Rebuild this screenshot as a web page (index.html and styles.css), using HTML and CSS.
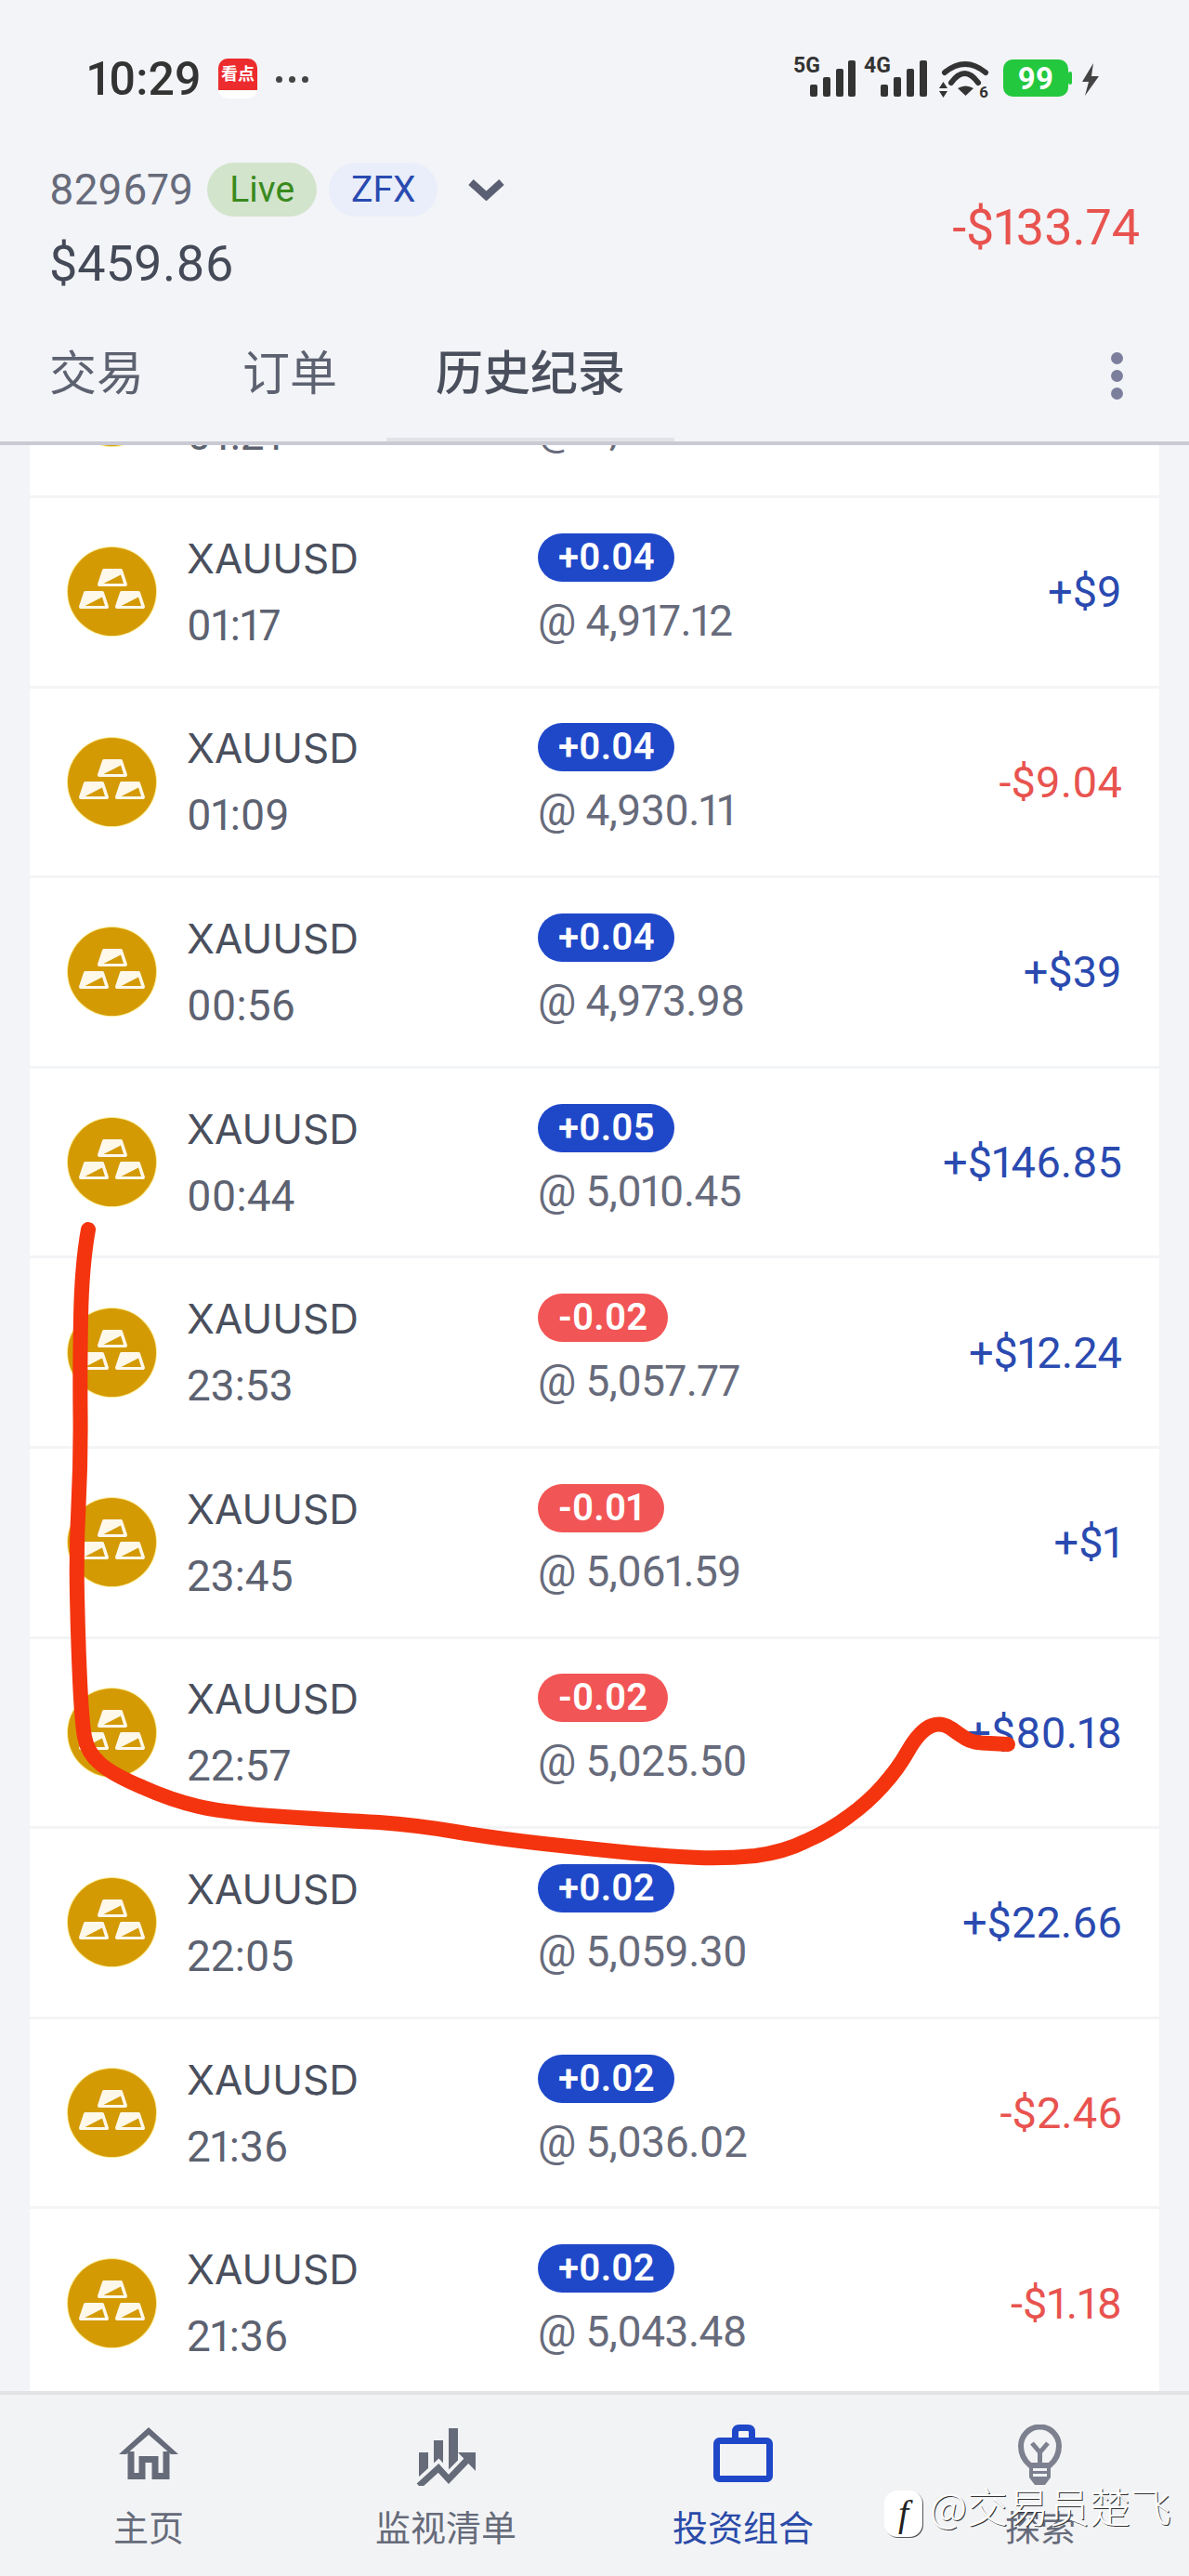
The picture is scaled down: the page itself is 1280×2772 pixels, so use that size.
FILE: index.html
```html
<!DOCTYPE html>
<html lang="zh-CN">
<head>
  <meta charset="UTF-8">
  <meta name="viewport" content="width=device-width, initial-scale=1.0">
  <title>历史纪录</title>
  <link rel="stylesheet" href="styles.css">
</head>
<body>

  <svg class="defs" width="0" height="0">
    <symbol id="gold" viewBox="0 0 97 97">
      <circle cx="48.5" cy="48.5" r="48.5" fill="#fbe98f"/>
      <circle cx="48.5" cy="48.5" r="47.5" fill="#d49a04"/>
      <path d="M40 26 H58 L63 41 H35 Z" fill="#fdf8ea" stroke="#fdf8ea" stroke-width="4" stroke-linejoin="round"/>
      <path d="M39.5 40 L58 30.500 L61 40 Z" fill="#d49a04"/>
      <path d="M20 50 H38 L43 65 H15 Z" fill="#fdf8ea" stroke="#fdf8ea" stroke-width="4" stroke-linejoin="round"/>
      <path d="M19.5 64 L38 54.500 L41 64 Z" fill="#d49a04"/>
      <path d="M59 50 H77 L82 65 H54 Z" fill="#fdf8ea" stroke="#fdf8ea" stroke-width="4" stroke-linejoin="round"/>
      <path d="M58.5 64 L77 54.500 L80 64 Z" fill="#d49a04"/>
    </symbol>
  </svg>

  <div class="app">

    <div class="status-bar">
      <span class="clock">10:29</span>
      <div class="app-icon">
        <span class="app-icon-name">看点</span>
      </div>
      <div class="status-dots"><i></i><i></i><i></i></div>
      <svg class="status-icons" width="330" height="66" viewBox="0 -10 330 66">
        <g fill="#333">
          <text x="0" y="18" class="net-label">5G</text>
          <rect x="18" y="31" width="8" height="13" rx="2"/>
          <rect x="32" y="23" width="8" height="21" rx="2"/>
          <rect x="46" y="14" width="8" height="30" rx="2"/>
          <rect x="59" y="5" width="8" height="39" rx="2"/>
          <text x="76" y="18" class="net-label">4G</text>
          <rect x="94" y="31" width="8" height="13" rx="2"/>
          <rect x="108" y="23" width="8" height="21" rx="2"/>
          <rect x="122" y="14" width="8" height="30" rx="2"/>
          <rect x="136" y="5" width="8" height="39" rx="2"/>
          <path d="M163 18 Q185 0 207 18 M170 29 Q184.500 9 199 29" fill="none" stroke="#333" stroke-width="6" stroke-linecap="round"/>
          <path d="M177 35 Q185.500 30 194 35 L185.500 43 Z"/>
          <path d="M157 35 H166 L161.500 28 Z M157 38 H166 L161.500 45 Z"/>
          <text x="200" y="45" class="wifi-label">6</text>
        </g>
        <rect x="226" y="4" width="70" height="40" rx="10" fill="#24c83e"/>
        <rect x="296" y="17" width="4" height="14" rx="2" fill="#24c83e"/>
        <text x="261" y="36" text-anchor="middle" class="battery-label">99</text>
        <path d="M323 8 L311 28 H318 L314 43 L329 22 H321 Z" fill="#444"/>
      </svg>
    </div>

    <div class="account">
      <div class="account-info">
        <div class="account-line">
          <span class="account-id">829679</span>
          <span class="pill pill-live">Live</span>
          <span class="pill pill-broker">ZFX</span>
          <svg class="chevron" width="39" height="24" viewBox="0 0 39 24">
            <path d="M3 4 L19.500 19 L36 4" fill="none" stroke="#5a5f73" stroke-width="8"/>
          </svg>
        </div>
        <div class="balance">$459.86</div>
      </div>
      <div class="pnl">-$133.74</div>
    </div>

    <div class="tabs">
      <div class="tab">交易</div>
      <div class="tab">订单</div>
      <div class="tab active">历史纪录</div>
      <div class="kebab"><i></i><i></i><i></i></div>
    </div>

    <div class="list">
      <div class="cards">

        <div class="row">
          <svg class="coin"><use href="#gold"/></svg>
          <div class="col-name"><div class="symbol">XAUUSD</div><div class="time">01:21</div></div>
          <div class="col-trade"><span class="badge buy">+0.04</span><div class="price">@ 4,960.96</div></div>
          <div class="amount gain">+$2</div>
        </div>

        <div class="row">
          <svg class="coin"><use href="#gold"/></svg>
          <div class="col-name"><div class="symbol">XAUUSD</div><div class="time">01:17</div></div>
          <div class="col-trade"><span class="badge buy">+0.04</span><div class="price">@ 4,917.12</div></div>
          <div class="amount gain">+$9</div>
        </div>

        <div class="row">
          <svg class="coin"><use href="#gold"/></svg>
          <div class="col-name"><div class="symbol">XAUUSD</div><div class="time">01:09</div></div>
          <div class="col-trade"><span class="badge buy">+0.04</span><div class="price">@ 4,930.11</div></div>
          <div class="amount loss">-$9.04</div>
        </div>

        <div class="row">
          <svg class="coin"><use href="#gold"/></svg>
          <div class="col-name"><div class="symbol">XAUUSD</div><div class="time">00:56</div></div>
          <div class="col-trade"><span class="badge buy">+0.04</span><div class="price">@ 4,973.98</div></div>
          <div class="amount gain">+$39</div>
        </div>

        <div class="row">
          <svg class="coin"><use href="#gold"/></svg>
          <div class="col-name"><div class="symbol">XAUUSD</div><div class="time">00:44</div></div>
          <div class="col-trade"><span class="badge buy">+0.05</span><div class="price">@ 5,010.45</div></div>
          <div class="amount gain">+$146.85</div>
        </div>

        <div class="row">
          <svg class="coin"><use href="#gold"/></svg>
          <div class="col-name"><div class="symbol">XAUUSD</div><div class="time">23:53</div></div>
          <div class="col-trade"><span class="badge sell">-0.02</span><div class="price">@ 5,057.77</div></div>
          <div class="amount gain">+$12.24</div>
        </div>

        <div class="row">
          <svg class="coin"><use href="#gold"/></svg>
          <div class="col-name"><div class="symbol">XAUUSD</div><div class="time">23:45</div></div>
          <div class="col-trade"><span class="badge sell">-0.01</span><div class="price">@ 5,061.59</div></div>
          <div class="amount gain">+$1</div>
        </div>

        <div class="row">
          <svg class="coin"><use href="#gold"/></svg>
          <div class="col-name"><div class="symbol">XAUUSD</div><div class="time">22:57</div></div>
          <div class="col-trade"><span class="badge sell">-0.02</span><div class="price">@ 5,025.50</div></div>
          <div class="amount gain">+$80.18</div>
        </div>

        <div class="row">
          <svg class="coin"><use href="#gold"/></svg>
          <div class="col-name"><div class="symbol">XAUUSD</div><div class="time">22:05</div></div>
          <div class="col-trade"><span class="badge buy">+0.02</span><div class="price">@ 5,059.30</div></div>
          <div class="amount gain">+$22.66</div>
        </div>

        <div class="row">
          <svg class="coin"><use href="#gold"/></svg>
          <div class="col-name"><div class="symbol">XAUUSD</div><div class="time">21:36</div></div>
          <div class="col-trade"><span class="badge buy">+0.02</span><div class="price">@ 5,036.02</div></div>
          <div class="amount loss">-$2.46</div>
        </div>

        <div class="row">
          <svg class="coin"><use href="#gold"/></svg>
          <div class="col-name"><div class="symbol">XAUUSD</div><div class="time">21:36</div></div>
          <div class="col-trade"><span class="badge buy">+0.02</span><div class="price">@ 5,043.48</div></div>
          <div class="amount loss">-$1.18</div>
        </div>

      </div>
    </div>

    <div class="bottom-nav">
      <div class="nav-item">
        <svg width="66" height="66" viewBox="0 0 66 66">
          <path d="M33 3 L65 32 H57 L33 11 L9 32 H1 Z" fill="#666b7a"/>
          <path d="M14 29 V55.500 H26 V37.500 H40 V55.500 H52 V29" fill="none" stroke="#666b7a" stroke-width="7"/>
        </svg>
        <span class="nav-label">主页</span>
      </div>
      <div class="nav-item">
        <svg width="66" height="66" viewBox="0 0 66 66">
          <rect x="4" y="30" width="10" height="34" fill="#666b7a"/>
          <rect x="20" y="17" width="10" height="36" fill="#666b7a"/>
          <rect x="36" y="4" width="10" height="44" fill="#666b7a"/>
          <path d="M1 69 L25 47 L36 59 L60 35" fill="none" stroke="#f2f3f5" stroke-width="15"/>
          <path d="M4 66 L25 47 L36 59 L57 37" fill="none" stroke="#666b7a" stroke-width="7"/>
          <path d="M46 30 H65 V50 Z" fill="#666b7a"/>
        </svg>
        <span class="nav-label">监视清单</span>
      </div>
      <div class="nav-item active">
        <svg width="66" height="66" viewBox="0 0 66 66">
          <rect x="4.500" y="17.500" width="57" height="41" rx="3" fill="none" stroke="#1f48c9" stroke-width="7"/>
          <path d="M24.500 17 V8 Q24.500 3.500 29 3.500 H38 Q42.500 3.500 42.500 8 V17" fill="none" stroke="#1f48c9" stroke-width="7"/>
        </svg>
        <span class="nav-label">投资组合</span>
      </div>
      <div class="nav-item">
        <svg width="66" height="66" viewBox="0 0 66 66">
          <path d="M22 44 C16 39 12 32 12 23 A20.500 20.500 0 0 1 53 23 C53 32 49 39 43 44 Z" fill="none" stroke="#7d808e" stroke-width="6" stroke-linejoin="round"/>
          <path d="M24 20 L32.500 30 L41 20 M32.500 30 V44" fill="none" stroke="#7d808e" stroke-width="5"/>
          <path d="M21 43 H44 V57 L38 65 H27 L21 57 Z" fill="#7d808e"/>
          <rect x="25" y="47" width="15" height="3" fill="#f2f3f5"/>
          <rect x="25" y="53" width="15" height="3" fill="#f2f3f5"/>
        </svg>
        <span class="nav-label">探索</span>
      </div>
    </div>

    <!-- pen mark drawn over the screenshot -->
    <svg class="pen-mark" width="1280" height="2772" viewBox="0 0 1280 2772">
      <path d="M95 1323 Q88 1362 87 1418 Q86 1474 86.500 1522 Q87 1571 84.500 1620 Q82 1668 83 1716 Q84 1765 86 1808 Q88 1852 91 1869 Q94 1886 108 1898 Q122 1910 153 1923 Q184 1937 214 1944 Q245 1951 306 1955 Q367 1959 408 1961 Q449 1964 490 1971 Q531 1978 585 1984 Q640 1990 681 1994 Q722 1998 752 1999 Q783 2000 813 1997 Q844 1993 868 1981 Q893 1970 913 1955 Q934 1940 950 1922 Q967 1903 977 1885 Q990 1862 1003 1857 Q1014 1853 1024 1860 Q1032 1866 1040 1871 Q1048 1876 1066 1876 L1085 1877" fill="none" stroke="#f4340e" stroke-width="16" stroke-linecap="round" stroke-linejoin="round"/>
    </svg>

    <div class="watermark">
      <span class="watermark-logo">f</span>
      <span class="watermark-text">@交易员楚飞</span>
    </div>

  </div>

</body>
</html>
```

FILE: styles.css
```css
* {
  box-sizing: border-box;
}
body {
  margin: 0;
  padding: 0;
  font-family: Roboto, "Noto Sans CJK SC", sans-serif;
  font-variant-numeric: proportional-nums;
  color: #4a4f5d;
}
.defs {
  display: block;
  height: 0;
}
.app {
  position: relative;
  display: flex;
  flex-direction: column;
  width: 1280px;
  height: 2772px;
  overflow: hidden;
  background-color: #f3f4f7;
}

/* status bar */
.status-bar {
  display: flex;
  flex: none;
  align-items: flex-start;
  height: 175px;
  padding: 60px 96px 0 94px;
}
.clock {
  font-size: 50px;
  font-weight: 500;
  line-height: 50px;
  color: #333;
}
.app-icon {
  width: 42px;
  height: 43px;
  margin: 3px 0 0 18px;
  padding-top: 6px;
  border-radius: 10px;
  background: linear-gradient(#ec2b2e 80%, #fff 80%);
  text-align: center;
}
.app-icon-name {
  display: block;
  font-size: 18px;
  font-weight: 700;
  line-height: 22px;
  color: #fff;
}
.status-dots {
  display: flex;
  gap: 7px;
  margin: 22px 0 0 20px;
}
.status-dots i {
  width: 7px;
  height: 7px;
  border-radius: 50%;
  background-color: #444;
}
.status-icons {
  margin: -10px 0 0 auto;
}
.net-label {
  font-size: 23px;
  font-weight: 700;
}
.wifi-label {
  font-size: 17px;
  font-weight: 700;
}
.battery-label {
  font-size: 33px;
  font-weight: 700;
  fill: #fff;
}

/* account header */
.account {
  display: flex;
  flex: none;
  justify-content: space-between;
  height: 165px;
  padding: 0 53px;
}
.account-line {
  display: flex;
  align-items: center;
  height: 58px;
}
.account-id {
  font-size: 46px;
  color: #676b7b;
}
.pill {
  display: flex;
  align-items: center;
  height: 58px;
  padding: 0 24px;
  border-radius: 29px;
  font-size: 39px;
}
.pill-live {
  margin-left: 15px;
  background-color: #d2e4cb;
  color: #3a8a1e;
}
.pill-broker {
  margin-left: 13px;
  background-color: #e9eefa;
  color: #2a4ab0;
}
.chevron {
  margin-left: 33px;
}
.balance {
  margin-top: 19px;
  font-size: 54px;
  font-weight: 400;
  line-height: 64px;
  color: #454a58;
}
.pnl {
  margin-top: 38px;
  font-size: 54px;
  line-height: 64px;
  color: #e8534f;
}

/* tabs */
.tabs {
  display: flex;
  flex: none;
  align-items: stretch;
  height: 139px;
  border-bottom: 4px solid #c9cad3;
}
.tab {
  padding: 25px 53px 0;
  border-bottom: 4px solid transparent;
  font-size: 51px;
  line-height: 76px;
  color: #5d6271;
}
.tab.active {
  border-bottom-color: #e2e3e8;
  font-weight: 500;
  color: #4a4f5d;
}
.kebab {
  display: flex;
  flex-direction: column;
  gap: 6px;
  margin: 39px 71px 0 auto;
}
.kebab i {
  width: 13px;
  height: 13px;
  border-radius: 50%;
  background-color: #7b7f9c;
}

/* trade list */
.list {
  flex: 1;
  min-height: 0;
  overflow: hidden;
  padding: 0 32px;
}
.cards {
  margin-top: -147.6px;
  background-color: #fff;
}
.row {
  display: flex;
  align-items: center;
  height: 204.6px;
  padding: 0 40px 0 40px;
  border-bottom: 3px solid #f3f4f6;
}
.coin {
  flex: none;
  width: 97px;
  height: 97px;
}
.col-name {
  flex: none;
  width: 410px;
  padding-left: 32px;
}
.symbol {
  font-family: Inter, Roboto, sans-serif;
  font-size: 44px;
  line-height: 52px;
  color: #4a4f5d;
}
.time {
  margin-top: 20px;
  font-size: 46px;
  line-height: 52px;
  color: #5d6271;
}
.col-trade {
  flex: none;
  margin-bottom: 6px;
}
.badge {
  display: inline-block;
  height: 52px;
  padding: 0 22px;
  border-radius: 26px;
  font-size: 40px;
  font-weight: 600;
  line-height: 52px;
  color: #fff;
}
.badge.buy {
  background-color: #1f48c9;
}
.badge.sell {
  background-color: #f25555;
}
.price {
  margin-top: 16px;
  font-size: 46px;
  letter-spacing: -0.6px;
  line-height: 52px;
  color: #676b7b;
}
.amount {
  margin-left: auto;
  font-size: 47px;
}
.gain {
  color: #2a4ab0;
}
.loss {
  color: #e8534f;
}

/* bottom nav */
.bottom-nav {
  display: grid;
  flex: none;
  grid-template-columns: repeat(4, 1fr);
  height: 199px;
  border-top: 4px solid #e2e3e5;
  background-color: #f2f3f5;
}
.nav-item {
  display: flex;
  flex-direction: column;
  align-items: center;
  padding-top: 32px;
}
.nav-label {
  margin-top: 21px;
  font-size: 38px;
  line-height: 50px;
  color: #666b7a;
}
.nav-item.active .nav-label {
  color: #2a4aa8;
}

/* things laid over the screenshot */
.pen-mark {
  position: absolute;
  top: 0;
  left: 0;
  pointer-events: none;
}
.watermark {
  position: absolute;
  top: 2671px;
  left: 952px;
  display: flex;
  align-items: flex-start;
  gap: 8px;
  color: #fff;
}
.watermark-logo {
  width: 41px;
  height: 50px;
  margin-top: 9px;
  border-radius: 14px;
  background-color: #fff;
  box-shadow: 1px 1px 0 #555;
  font-family: "Liberation Serif", serif;
  font-size: 40px;
  font-style: italic;
  line-height: 50px;
  text-align: center;
  color: #222;
}
.watermark-text {
  font-family: "Noto Sans CJK SC", sans-serif;
  font-size: 44px;
  font-weight: 300;
  line-height: 50px;
  text-shadow: 1px 1px 0 #333;
}
```
